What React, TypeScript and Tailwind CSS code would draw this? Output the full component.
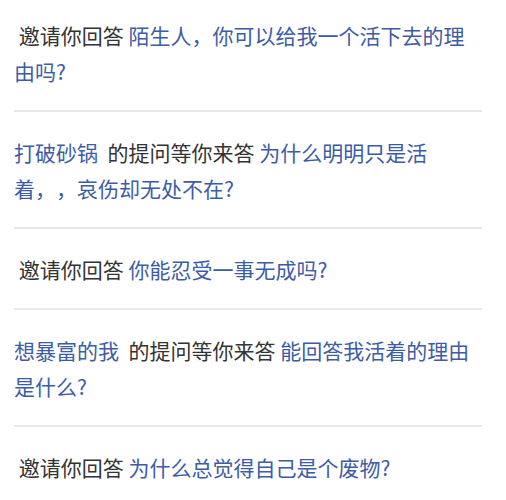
const items = [
  { user: '', action: ' 邀请你回答', question: '陌生人，你可以给我一个活下去的理由吗?' },
  { user: '打破砂锅', action: '  的提问等你来答', question: '为什么明明只是活着，，哀伤却无处不在?' },
  { user: '', action: ' 邀请你回答', question: '你能忍受一事无成吗?' },
  { user: '想暴富的我', action: '  的提问等你来答', question: '能回答我活着的理由是什么?' },
  { user: '', action: ' 邀请你回答', question: '为什么总觉得自己是个废物?' },
]

export default function App() {
  return (
    <div className="min-h-[500px] bg-white pl-[14px] font-['Noto_Sans_CJK_SC',sans-serif] text-[21px] leading-[36px] [text-spacing-trim:space-all]">
      <ul className="w-[468px]">
        {items.map((it, i) => (
          <li
            key={i}
            className="border-b-2 border-[#e8e8e8] pt-[22px] pb-[21px] first:pt-[17px] last:border-b-0"
          >
            <p className="whitespace-pre-wrap break-all">
              {it.user && <a className="text-[#3d5ca6]">{it.user}</a>}
              <span className="text-[#333333]">{it.action} </span>
              <a className="text-[#3d5ca6]">{it.question}</a>
            </p>
          </li>
        ))}
      </ul>
    </div>
  )
}
